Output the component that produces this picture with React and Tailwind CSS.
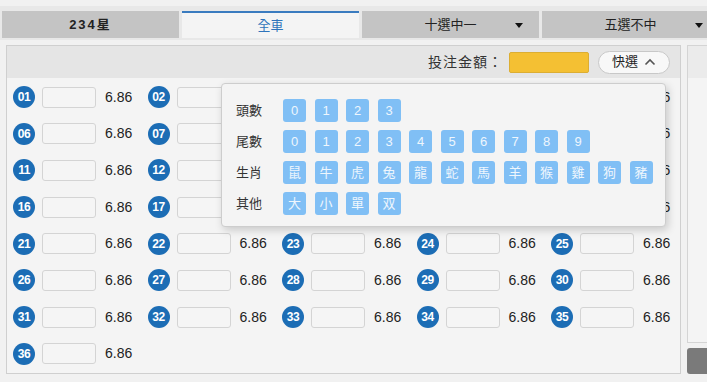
import React from 'react';

const FONT = "font-['Liberation_Sans','Noto_Sans_CJK_TC',sans-serif]";

const tabs = [
    { label: '234星', active: false, drop: false },
    { label: '全車', active: true, drop: false },
    { label: '十選中一', active: false, drop: true },
    { label: '五選不中', active: false, drop: true },
];

const quickRows = [
    { label: '頭數', items: ['0', '1', '2', '3'] },
    { label: '尾數', items: ['0', '1', '2', '3', '4', '5', '6', '7', '8', '9'] },
    { label: '生肖', items: ['鼠', '牛', '虎', '兔', '龍', '蛇', '馬', '羊', '猴', '雞', '狗', '豬'] },
    { label: '其他', items: ['大', '小', '單', '双'] },
];

const numbers = Array.from({ length: 36 }, (_, i) => String(i + 1).padStart(2, '0'));

const Tab = ({ tab }) => (
    <div
        className={`relative w-[177px] h-[27px] shrink-0 flex items-center justify-center ${tab.active ? 'bg-[#f4f4f4] border-t-2 border-[#3a7bbf] text-[#2f74bb] text-[13px]' : 'bg-[#c4c4c4] text-[#222] text-[13px]'}`}
    >
        {tab.label === '234星' ? (
            <span className="font-bold text-[13px] tracking-[2px] text-[#222]">234星</span>
        ) : (
            <span>{tab.label}</span>
        )}
        {tab.drop && (
            <span className="absolute right-[16px] top-[12px] w-0 h-0 border-l-[4px] border-r-[4px] border-t-[5px] border-l-transparent border-r-transparent border-t-[#111]" />
        )}
    </div>
);

const NumberCell = ({ n }) => (
    <div className="flex items-center h-[22px]">
        <div className="w-[22px] h-[22px] rounded-full bg-[#1c6db5] text-white text-[12px] font-bold flex items-center justify-center tracking-[-0.5px]">
            {n}
        </div>
        <div className="ml-[7px] w-[54px] h-[21px] rounded-[3px] border border-[#d4d4d4] bg-[#f5f5f5]" />
        <span className="ml-[9px] text-[14px] text-[#222]">6.86</span>
    </div>
);

export default function App() {
    return (
        <div className={`w-[707px] h-[382px] overflow-hidden bg-[#f1f1f1] ${FONT}`}>
            {/* tab bar */}
            <div className="mt-[6px] h-[34px] bg-[#e8e8e8] pt-[5px] pl-[2px] flex gap-[3px]">
                {tabs.map((t) => (
                    <Tab key={t.label} tab={t} />
                ))}
            </div>

            <div className="flex mt-[5px] pl-[6px] gap-[6px]">
                {/* main panel */}
                <div className="w-[675px] h-[329px] shrink-0 border border-[#cfcfcf] bg-[#f4f4f4] flex flex-col">
                    <div className="h-[32px] bg-[#e5e5e5] flex items-center justify-end pr-[10px]">
                        <span className="text-[14px] text-[#333] tracking-[1px]">投注金額：</span>
                        <div className="ml-[6px] w-[80px] h-[21px] bg-[#f4c033] border border-[#dcae33] rounded-[2px]" />
                        <button className="ml-[9px] w-[72px] h-[23px] rounded-full border border-[#c8c8c8] bg-[#f8f8f8] flex items-center justify-center gap-[6px] text-[13px] text-[#222]">
                            快選
                            <svg width="12" height="8" viewBox="0 0 12 8" fill="none">
                                <path d="M1.5 6.5 L6 2 L10.5 6.5" stroke="#555" strokeWidth="1.6" />
                            </svg>
                        </button>
                    </div>

                    <div className="relative flex-1">
                        <div className="grid grid-cols-[repeat(5,134.5px)] gap-y-[14.7px] pl-[6px] pt-[8px]">
                            {numbers.map((n) => (
                                <NumberCell key={n} n={n} />
                            ))}
                        </div>

                        {/* quick select popup */}
                        <div className="absolute left-[214px] top-[5px] w-[445px] h-[144px] rounded-[4px] border border-[#cdcdcd] bg-[#f4f4f4] shadow-[2px_3px_8px_rgba(0,0,0,0.18)] pt-[15px] pl-[14px] flex flex-col gap-[8px]">
                            {quickRows.map((row) => (
                                <div key={row.label} className="flex items-center h-[23px]">
                                    <span className="w-[47px] text-[13px] text-[#333]">{row.label}</span>
                                    <div className="flex gap-[8.5px]">
                                        {row.items.map((it, i) => (
                                            <div
                                                key={i}
                                                className="w-[23px] h-[23px] rounded-[3px] bg-[#80bff5] text-[#eef6fd] text-[13px] flex items-center justify-center"
                                            >
                                                {it}
                                            </div>
                                        ))}
                                    </div>
                                </div>
                            ))}
                        </div>
                    </div>
                </div>

                {/* right column */}
                <div className="w-[40px] shrink-0 flex flex-col gap-[5px]">
                    <div className="h-[298px] border border-[#d4d4d4] bg-[#f4f4f4] flex flex-col">
                        <div className="h-[32px] bg-[#ebebeb]" />
                    </div>
                    <div className="h-[26px] rounded-[3px] bg-[#7a7a7a]" />
                </div>
            </div>
        </div>
    );
}
